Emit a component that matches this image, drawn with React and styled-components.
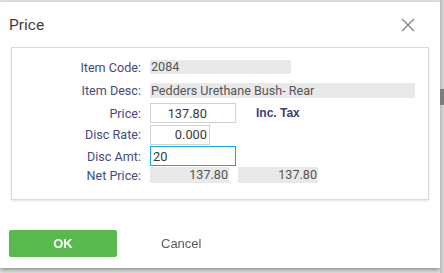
import React from 'react';
import styled, { createGlobalStyle } from 'styled-components';

const GlobalStyle = createGlobalStyle`
  html, body {
    margin: 0;
    padding: 0;
    background: #e6e6e6;
    overflow: hidden;
  }
  body {
    font-family: Roboto, "Liberation Sans", Arial, sans-serif;
  }
`;

const Page = styled.div`
  display: flex;
  height: 273px;
  width: 444px;
`;

const Dialog = styled.div`
  width: 440px;
  height: 266px;
  margin-top: 2px;
  background: #fff;
  box-shadow: 0 2px 5px rgba(0, 0, 0, 0.4);
  display: flex;
  flex-direction: column;
`;

const ScrollStrip = styled.div`
  width: 4px;
  height: 273px;
  background: linear-gradient(90deg, #b9b9b9, #d9d9d9);
  display: flex;
  flex-direction: column;
`;

const Thumb = styled.div`
  margin-top: 89px;
  height: 16px;
  background: #7d7d7d;
`;

const Header = styled.div`
  height: 45px;
  display: flex;
  align-items: center;
  justify-content: space-between;
  padding: 0 25px 0 9px;
`;

const Title = styled.h2`
  margin: 0;
  font-size: 15.5px;
  font-weight: 400;
  color: #404040;
`;

const CloseButton = styled.button`
  border: 0;
  background: none;
  padding: 0;
  width: 14px;
  height: 14px;
  display: flex;
  cursor: pointer;
`;

const Panel = styled.div`
  margin: 0 11px;
  border: 1px solid #dcdcdc;
  box-shadow: 0 1px 2px rgba(0, 0, 0, 0.12);
  padding: 8px 0 16px;
  display: flex;
  flex-direction: column;
`;

const Row = styled.div`
  display: grid;
  grid-template-columns: 129px auto;
  column-gap: 9px;
  align-items: center;
  height: ${({ h }) => h}px;
`;

const Label = styled.label`
  text-align: right;
  font-size: 12.6px;
  color: #4a4880;
  white-space: nowrap;
`;

const Fields = styled.div`
  display: flex;
  align-items: center;
  gap: ${({ gap }) => gap || 0}px;
`;

const ReadOnly = styled.div`
  box-sizing: border-box;
  width: ${({ w }) => w}px;
  height: ${({ h }) => h}px;
  line-height: ${({ h }) => h}px;
  background: #e9e9e9;
  color: #555;
  font-size: 12.6px;
  padding: 0 1px;
  text-align: ${({ align }) => align || 'left'};
  white-space: nowrap;
  overflow: hidden;
`;

const Input = styled.input`
  box-sizing: border-box;
  width: ${({ w }) => w}px;
  height: ${({ h }) => h || 20}px;
  border: 1px solid ${({ active }) => (active ? '#1aa6df' : '#d2d2d2')};
  outline: none;
  margin: 0;
  font-family: Roboto, "Liberation Sans", Arial, sans-serif;
  font-size: 12.8px;
  color: #3a3a3a;
  text-align: ${({ align }) => align || 'right'};
  padding: 0 ${({ pr }) => pr || 2}px 0 2px;
  background: #fff;
`;

const Note = styled.span`
  font-family: "Liberation Sans", Arial, sans-serif;
  font-weight: 700;
  font-size: 12px;
  color: #3f3c78;
  margin-left: 20px;
  align-self: flex-start;
  margin-top: 3px;
`;

const Footer = styled.div`
  display: flex;
  align-items: center;
  gap: 44px;
  padding: 30px 9px 0;
`;

const OkButton = styled.button`
  width: 108px;
  height: 27px;
  border: 0;
  border-radius: 2px;
  background: #59b94f;
  color: #fff;
  font-family: "Liberation Sans", Arial, sans-serif;
  font-weight: 700;
  font-size: 13px;
  cursor: pointer;
`;

const TextButton = styled.button`
  border: 0;
  background: none;
  padding: 0;
  color: #5a5a5a;
  font-family: "Liberation Sans", Arial, sans-serif;
  font-size: 13px;
  cursor: pointer;
`;

export default function App() {
  return (
    <Page>
      <GlobalStyle />
      <Dialog>
        <Header>
          <Title>Price</Title>
          <CloseButton aria-label="Close">
            <svg width="14" height="14" viewBox="0 0 14 14">
              <path d="M1 1L13 13M13 1L1 13" stroke="#808080" strokeWidth="1.3" fill="none" />
            </svg>
          </CloseButton>
        </Header>
        <Panel>
          <Row h={22}>
            <Label>Item Code:</Label>
            <Fields>
              <ReadOnly w={141} h={14}>2084</ReadOnly>
            </Fields>
          </Row>
          <Row h={24}>
            <Label>Item Desc:</Label>
            <Fields>
              <ReadOnly w={265} h={15}>Pedders Urethane Bush- Rear</ReadOnly>
            </Fields>
          </Row>
          <Row h={22}>
            <Label>Price:</Label>
            <Fields>
              <Input w={86} pr={28} defaultValue="137.80" />
              <Note>Inc. Tax</Note>
            </Fields>
          </Row>
          <Row h={21}>
            <Label>Disc Rate:</Label>
            <Fields>
              <Input w={60} defaultValue="0.000" />
            </Fields>
          </Row>
          <Row h={22}>
            <Label>Disc Amt:</Label>
            <Fields>
              <Input w={86} align="left" active defaultValue="20" autoFocus />
            </Fields>
          </Row>
          <Row h={16}>
            <Label>Net Price:</Label>
            <Fields gap={9}>
              <ReadOnly w={79} h={16} align="right">137.80</ReadOnly>
              <ReadOnly w={80} h={16} align="right">137.80</ReadOnly>
            </Fields>
          </Row>
        </Panel>
        <Footer>
          <OkButton>OK</OkButton>
          <TextButton>Cancel</TextButton>
        </Footer>
      </Dialog>
      <ScrollStrip>
        <Thumb />
      </ScrollStrip>
    </Page>
  );
}
